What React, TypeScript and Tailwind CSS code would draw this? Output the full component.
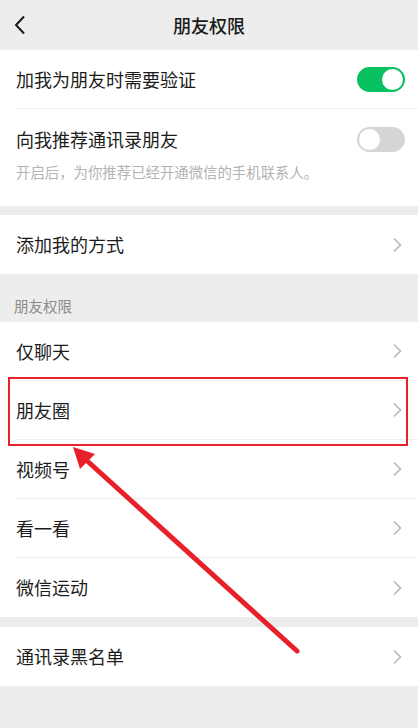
import * as React from "react";

const font = { fontFamily: '"Noto Sans CJK SC", "Noto Sans", sans-serif' };

function Chevron() {
  return (
    <svg width="10" height="16" viewBox="0 0 10 16" className="shrink-0">
      <path d="M2 1.5 L8.5 8 L2 14.5" fill="none" stroke="#b8b8b8" strokeWidth="1.6" />
    </svg>
  );
}

function Toggle({ on }: { on: boolean }) {
  return (
    <div
      className={
        "w-[48px] h-[25px] rounded-full flex items-center px-[2px] " +
        (on ? "bg-[#07c160] justify-end" : "bg-[#d6d6d6] justify-start")
      }
    >
      <div className="w-[21px] h-[21px] rounded-full bg-white" />
    </div>
  );
}

function Row({ label, last }: { label: string; last?: boolean }) {
  return (
    <div className="bg-white pl-4">
      <div
        className={
          "h-[59px] flex items-center justify-between pr-[16px] " +
          (last ? "" : "border-b border-[#eeeeee]")
        }
      >
        <span className="text-[18px] text-[#1c1c1c]">{label}</span>
        <Chevron />
      </div>
    </div>
  );
}

export default function App() {
  return (
    <div className="relative w-[418px] h-[728px] bg-[#ededed] overflow-hidden" style={font}>
      {/* header */}
      <div className="relative h-[50px] flex items-center justify-center">
        <svg width="12" height="20" viewBox="0 0 12 20" className="absolute left-[14px] top-[15px]">
          <path d="M10 1.5 L2 10 L10 18.5" fill="none" stroke="#1a1a1a" strokeWidth="2" />
        </svg>
        <span className="text-[18px] font-medium text-[#1a1a1a]">朋友权限</span>
      </div>

      {/* verification */}
      <div className="bg-white pl-4">
        <div className="h-[59px] flex items-center justify-between pr-[13px] border-b border-[#eeeeee]">
          <span className="text-[18px] text-[#1c1c1c]">加我为朋友时需要验证</span>
          <Toggle on />
        </div>
        <div className="pt-[17px] pb-[24px] pr-[13px]">
          <div className="flex items-center justify-between">
            <span className="text-[18px] text-[#1c1c1c]">向我推荐通讯录朋友</span>
            <Toggle on={false} />
          </div>
          <div className="mt-[9px] text-[14.4px] leading-[20px] text-[#b3b3b3]">
            开启后，为你推荐已经开通微信的手机联系人。
          </div>
        </div>
      </div>

      <div className="h-[9px]" />
      <Row label="添加我的方式" last />

      <div className="h-[48px] flex items-end pl-[14px] pb-[5px]">
        <span className="text-[14.5px] text-[#8a8a8a]">朋友权限</span>
      </div>

      <Row label="仅聊天" />
      <Row label="朋友圈" />
      <Row label="视频号" />
      <Row label="看一看" />
      <Row label="微信运动" last />

      <div className="h-[10px]" />
      <Row label="通讯录黑名单" last />

      {/* annotation */}
      <div className="absolute left-[8px] top-[377px] w-[400px] h-[69px] border-2 border-[#e8202a]" />
      <svg className="absolute left-0 top-0" width="418" height="728" viewBox="0 0 418 728">
        <line x1="297" y1="651" x2="84" y2="458" stroke="#e8202a" strokeWidth="5" strokeLinecap="round" />
        <polygon points="73,447 95,454 80,469" fill="#e8202a" />
      </svg>
    </div>
  );
}
